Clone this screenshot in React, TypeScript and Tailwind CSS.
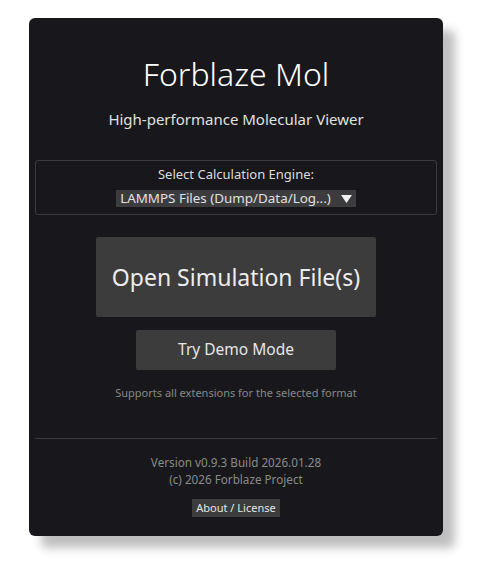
export default function App() {
  return (
    <div className="w-[478px] h-[564px] bg-white pt-[18px] pl-[29px]" style={{ fontFamily: '"Noto Sans", sans-serif' }}>
      <div className="w-[414px] h-[518px] rounded-[6px] bg-[#18181c] shadow-[12px_12px_10px_rgba(0,0,0,0.25)] flex flex-col items-center px-[6px] text-[#e6e6e6]">
        <h1 className="mt-[38px] text-[32px] leading-[36px] font-light text-white">Forblaze Mol</h1>
        <p className="mt-[17px] text-[15px] leading-[20px] text-[#e0e0e0]">High-performance Molecular Viewer</p>
        <div className="mt-[31px] w-full h-[55px] border border-[#3a3a40] rounded-[3px] flex flex-col items-center pt-[4px]">
          <div className="text-[13px] leading-[18px] text-[#dcdcdc]">Select Calculation Engine:</div>
          <div className="mt-[7px] h-[17px] bg-[#3c3c3e] flex items-center px-[4px] gap-[10px] text-[13.4px] leading-[17px] text-[#e0e0e0]">
            <span>LAMMPS Files (Dump/Data/Log...)</span>
            <svg width="11" height="8" viewBox="0 0 11 8"><path d="M0 0 L11 0 L5.5 8 Z" fill="#f0f0f0" /></svg>
          </div>
        </div>
        <button className="mt-[22px] w-[280px] h-[80px] bg-[#3c3c3c] rounded-[2px] text-[23px] text-[#ececec]">Open Simulation File(s)</button>
        <button className="mt-[13px] w-[200px] h-[40px] bg-[#3c3c3c] rounded-[2px] text-[15.5px] text-[#e6e6e6]">Try Demo Mode</button>
        <p className="mt-[16px] text-[11px] leading-[14px] text-[#888888]">Supports all extensions for the selected format</p>
        <div className="mt-[38px] w-full h-px bg-[#38383c]" />
        <div className="mt-[15px] text-[11.7px] leading-[17px] text-[#8a8a8a] text-center">
          <div>Version v0.9.3 Build 2026.01.28</div>
          <div>(c) 2026 Forblaze Project</div>
        </div>
        <button className="mt-[11px] h-[18px] px-[4px] bg-[#3c3c3c] text-[11px] leading-[18px] text-[#e6e6e6]">About / License</button>
      </div>
    </div>
  );
}
